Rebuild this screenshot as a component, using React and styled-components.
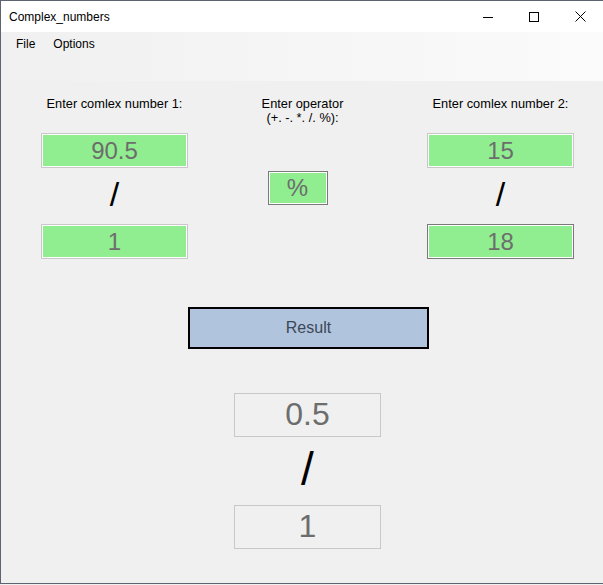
import React from "react";
import styled, { createGlobalStyle } from "styled-components";

const GlobalStyle = createGlobalStyle`
  html, body {
    margin: 0;
    padding: 0;
    background: #f0f0f0;
  }
  * {
    box-sizing: border-box;
  }
`;

const Window = styled.div`
  width: 603px;
  height: 584px;
  display: flex;
  flex-direction: column;
  background: #f0f0f0;
  border-top: 1px solid #5d6470;
  border-left: 1px solid #5d6470;
  border-bottom: 1px solid #5d6470;
  font-family: "Liberation Sans", Arial, sans-serif;
  overflow: hidden;
`;

const TitleBar = styled.div`
  height: 31px;
  display: flex;
  align-items: center;
  background: #ffffff;
  flex-shrink: 0;
`;

const Title = styled.div`
  flex: 1;
  padding-left: 8px;
  font-size: 12px;
  color: #000;
`;

const WinButton = styled.div`
  width: 46px;
  height: 31px;
  display: flex;
  align-items: center;
  justify-content: center;
`;

const MenuArea = styled.div`
  height: 49px;
  flex-shrink: 0;
  background: linear-gradient(to right, #f0f0f0, #fbfbfb);
`;

const MenuStrip = styled.div`
  height: 24px;
  display: flex;
  align-items: center;
  padding-left: 6px;
`;

const MenuItem = styled.div`
  font-size: 12px;
  color: #000;
  padding: 0 9px;
`;

const Content = styled.div`
  display: flex;
  flex-direction: column;
  align-items: center;
  padding: 16px 29px 0 40px;
`;

const Columns = styled.div`
  width: 100%;
  display: grid;
  grid-template-columns: 147px 1fr 147px;
`;

const Column = styled.div`
  display: flex;
  flex-direction: column;
  align-items: center;
`;

const Label = styled.div`
  font-size: 12.8px;
  line-height: 14px;
  color: #000;
  text-align: center;
  white-space: nowrap;
  margin-right: ${(p) => p.$shift || 0}px;
`;

const NumberBox = styled.input`
  width: ${(p) => p.$w || 147}px;
  height: ${(p) => p.$h || 35}px;
  margin: 0;
  margin-top: ${(p) => p.$top || 0}px;
  margin-right: ${(p) => p.$shift || 0}px;
  padding: 0;
  border: 1px solid ${(p) => (p.$focus ? "#7a7a7a" : "#c8c8c8")};
  box-shadow: inset 0 0 0 1px #ffffff;
  background: #90ee90;
  color: #6d6d6d;
  font-family: "Liberation Sans", Arial, sans-serif;
  font-size: 24px;
  text-align: center;
  outline: none;
`;

const Slash = styled.div`
  height: ${(p) => p.$h}px;
  padding-bottom: 4px;
  display: flex;
  align-items: center;
  justify-content: center;
  font-size: ${(p) => p.$size}px;
  color: #000;
  line-height: 1;
`;

const ResultButton = styled.button`
  width: 241px;
  height: 42px;
  margin-top: 48px;
  margin-left: 2px;
  border: 2px solid #000;
  background: #b0c4de;
  color: #3d4856;
  font-family: "Liberation Sans", Arial, sans-serif;
  font-size: 16px;
  cursor: pointer;
`;

const Output = styled.div`
  margin-top: 44px;
  display: flex;
  flex-direction: column;
  align-items: center;
`;

const OutputBox = styled.input`
  width: 147px;
  height: 44px;
  margin: 0;
  padding: 0 0 2px;
  border: 1px solid #c8c8c8;
  background: #f0f0f0;
  color: #6d6d6d;
  font-family: "Liberation Sans", Arial, sans-serif;
  font-size: 32px;
  text-align: center;
  outline: none;
`;

function Minimize() {
  return (
    <svg width="10" height="10" viewBox="0 0 10 10">
      <line x1="0" y1="5.5" x2="10" y2="5.5" stroke="#000" strokeWidth="1" />
    </svg>
  );
}

function Maximize() {
  return (
    <svg width="10" height="10" viewBox="0 0 10 10">
      <rect x="0.5" y="0.5" width="9" height="9" fill="none" stroke="#000" strokeWidth="1" />
    </svg>
  );
}

function Close() {
  return (
    <svg width="11" height="11" viewBox="0 0 11 11">
      <path d="M0.5 0.5 L10.5 10.5 M10.5 0.5 L0.5 10.5" stroke="#000" strokeWidth="1" />
    </svg>
  );
}

function NumberColumn({ label, re, im, focusIm }) {
  return (
    <Column>
      <Label>{label}</Label>
      <NumberBox $top={22} defaultValue={re} readOnly />
      <Slash $h={56} $size={34}>/</Slash>
      <NumberBox defaultValue={im} $focus={focusIm} readOnly />
    </Column>
  );
}

export default function App() {
  return (
    <>
      <GlobalStyle />
      <Window>
        <TitleBar>
          <Title>Complex_numbers</Title>
          <WinButton>
            <Minimize />
          </WinButton>
          <WinButton>
            <Maximize />
          </WinButton>
          <WinButton>
            <Close />
          </WinButton>
        </TitleBar>
        <MenuArea>
          <MenuStrip>
            <MenuItem>File</MenuItem>
            <MenuItem>Options</MenuItem>
          </MenuStrip>
        </MenuArea>
        <Content>
          <Columns>
            <NumberColumn label="Enter comlex number 1:" re="90.5" im="1" />
            <Column>
              <Label $shift={10}>
                Enter operator
                <br />
                (+. -. *. /. %):
              </Label>
              <NumberBox $w={60} $h={34} $top={46} $shift={20} $focus defaultValue="%" readOnly />
            </Column>
            <NumberColumn label="Enter comlex number 2:" re="15" im="18" focusIm />
          </Columns>
          <ResultButton>Result</ResultButton>
          <Output>
            <OutputBox defaultValue="0.5" readOnly />
            <Slash $h={68} $size={46}>/</Slash>
            <OutputBox defaultValue="1" readOnly />
          </Output>
        </Content>
      </Window>
    </>
  );
}
